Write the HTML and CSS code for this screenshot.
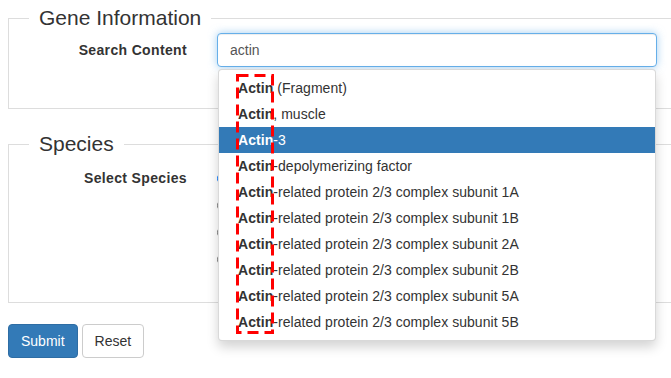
FILE: index.html
```html
<!DOCTYPE html>
<html lang="en">
<head>
	<meta charset="UTF-8" />
	<title>Gene Search</title>
	<link rel="stylesheet" href="styles.css">
</head>
<body>
	<form class="gene_form" action="#" method="post">
		<fieldset class="grp">
			<legend>Gene Information</legend>
			<div class="grp_row">
				<label class="grp_label" for="content">Search Content</label>
				<div class="grp_field">
					<input id="content" name="content" type="text" class="txt_in" value="actin" autocomplete="off" />
					<ul class="suggest">
						<li><a href="#"><strong>Actin</strong> (Fragment)</a></li>
						<li><a href="#"><strong>Actin</strong>, muscle</a></li>
						<li class="on"><a href="#"><strong>Actin</strong>-3</a></li>
						<li><a href="#"><strong>Actin</strong>-depolymerizing factor</a></li>
						<li><a href="#"><strong>Actin</strong>-related protein 2/3 complex subunit 1A</a></li>
						<li><a href="#"><strong>Actin</strong>-related protein 2/3 complex subunit 1B</a></li>
						<li><a href="#"><strong>Actin</strong>-related protein 2/3 complex subunit 2A</a></li>
						<li><a href="#"><strong>Actin</strong>-related protein 2/3 complex subunit 2B</a></li>
						<li><a href="#"><strong>Actin</strong>-related protein 2/3 complex subunit 5A</a></li>
						<li><a href="#"><strong>Actin</strong>-related protein 2/3 complex subunit 5B</a></li>
						<!-- annotation box over the matched prefix -->
						<svg class="mark" width="38" height="260" viewBox="0 0 38 260">
							<rect x="1.5" y="1.5" width="35" height="257" fill="none" stroke="#f00" stroke-width="3" stroke-dasharray="11 6"/>
						</svg>
					</ul>
				</div>
			</div>
		</fieldset>

		<fieldset class="grp grp_species">
			<legend>Species</legend>
			<div class="grp_row">
				<label class="grp_label">Select Species</label>
				<div class="grp_field">
					<div class="rad"><label><input type="radio" name="species" value="hs" checked /> Homo sapiens</label></div>
					<div class="rad"><label><input type="radio" name="species" value="mm" /> Mus musculus</label></div>
					<div class="rad"><label><input type="radio" name="species" value="rn" /> Rattus norvegicus</label></div>
					<div class="rad"><label><input type="radio" name="species" value="all" /> All species</label></div>
				</div>
			</div>
		</fieldset>

		<div class="btns">
			<button type="submit" class="btn btn_main">Submit</button>
			<button type="reset" class="btn">Reset</button>
		</div>
	</form>
</body>
</html>
```

FILE: styles.css
```css
* { margin: 0; padding: 0; box-sizing: border-box; }
html, body { overflow: hidden; }
body {
    background: #fff;
    color: #333;
    font-family: "Liberation Sans", Arial, sans-serif;
    font-size: 14px;
    line-height: 20px;
}
a { text-decoration: none; }

.gene_form { padding: 3px 8px 0; }

.grp {
    border: 1px solid #ddd;
    margin-right: -30px;
    padding: 0 20px 41px;
}
.grp legend {
    font-size: 21px;
    line-height: 30px;
    padding: 0 10px;
    color: #333;
}
.grp_species {
    margin-top: 20px;
    padding-bottom: 33px;
}
.grp_species .grp_row { padding-top: 2px; }

.grp_row {
    display: grid;
    grid-template-columns: 158px 440px;
    column-gap: 30px;
}
.grp_label {
    text-align: right;
    font-weight: bold;
    letter-spacing: .35px;
    padding-top: 7px;
}
.grp_field { position: relative; }

.txt_in {
    display: block;
    width: 100%;
    height: 34px;
    padding: 6px 12px;
    font: inherit;
    color: #555;
    border: 1px solid #66afe9;
    border-radius: 4px;
    outline: 0;
    box-shadow: inset 0 1px 1px rgba(0,0,0,.075), 0 0 8px rgba(102,175,233,.6);
}

.suggest {
    position: absolute;
    top: 100%;
    left: 1px;
    right: 1px;
    z-index: 10;
    margin-top: 2px;
    padding: 5px 0;
    list-style: none;
    background: #fff;
    border: 1px solid rgba(0,0,0,.15);
    border-radius: 4px;
    box-shadow: 0 6px 12px rgba(0,0,0,.175);
}
.suggest li a {
    display: block;
    padding: 3px 20px 3px 19px;
    color: #333;
    letter-spacing: .05px;
    white-space: nowrap;
}
.suggest li.on a {
    background: #337ab7;
    color: #fff;
}
.mark {
    position: absolute;
    left: 17px;
    top: 4px;
}

.rad {
    height: 27px;
    padding-top: 7px;
}
.rad label { display: block; padding-left: 20px; }
.rad input {
    margin: 4px 0 0 -20px;
    float: left;
    width: 13px;
    height: 13px;
}

.btns {
    display: flex;
    gap: 4px;
    margin-top: 21px;
}
.btn {
    height: 34px;
    padding: 6px 12px;
    font: inherit;
    color: #333;
    background: #fff;
    border: 1px solid #ccc;
    border-radius: 4px;
    cursor: pointer;
}
.btn_main {
    color: #fff;
    background: #337ab7;
    border-color: #2e6da4;
}
```
